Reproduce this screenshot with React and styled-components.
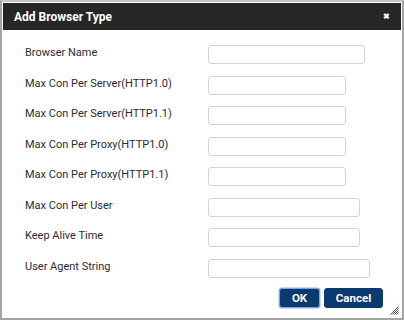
import React from "react";
import styled, { createGlobalStyle } from "styled-components";

const Global = createGlobalStyle`
  html, body { margin: 0; padding: 0; background: #fff; }
  body { font-family: Roboto, "Liberation Sans", sans-serif; }
  * { box-sizing: border-box; }
`;

const Dialog = styled.div`
  position: relative;
  width: 404px;
  height: 320px;
  border: 2px solid #a3a3a3;
  border-top-color: #c4c4c4;
  padding: 1px 1px 0 1px;
  background: #fff;
  display: flex;
  flex-direction: column;
`;

const TitleBar = styled.div`
  height: 27px;
  background: #262626;
  display: flex;
  align-items: center;
  justify-content: space-between;
  padding: 0 11px 0 11px;
  color: #fff;
`;

const Title = styled.span`
  font-size: 12px;
  font-weight: 700;
`;

const Close = styled.span`
  font-size: 8px;
  font-weight: 700;
  line-height: 1;
`;

const Body = styled.div`
  flex: 1;
  display: flex;
  flex-direction: column;
  padding: 15px 18px 0 22px;
`;

const Form = styled.div`
  display: grid;
  grid-template-columns: 183px 1fr;
  grid-auto-rows: 19px;
  row-gap: 11.57px;
  align-items: start;
`;

const Label = styled.label`
  font-size: 11px;
  line-height: 13px;
  color: #2b2b33;
  padding-top: 1px;
`;

const Input = styled.input`
  width: ${(p) => p.$w}px;
  height: 19px;
  border: 1px solid #d3d3d3;
  border-radius: 3px;
  background: #fff;
  padding: 0 4px;
  margin: 0;
  font: inherit;
  font-size: 11px;
  outline: none;
`;

const Footer = styled.div`
  display: flex;
  justify-content: flex-end;
  gap: 4px;
  margin-top: 10px;
`;

const Button = styled.button`
  height: 20px;
  min-width: ${(p) => p.$w}px;
  background: #0b3a70;
  color: #fff;
  border: 1px solid ${(p) => (p.$focus ? "#7fa6e0" : "#0b3a70")};
  box-shadow: ${(p) => (p.$focus ? "0 0 0 0.5px #9bb9e8" : "none")};
  border-radius: 3px;
  font-family: Roboto, "Liberation Sans", sans-serif;
  font-size: 11.5px;
  font-weight: 700;
  padding: 0 8px;
  cursor: pointer;
`;

const Grip = styled.svg`
  position: absolute;
  right: 3px;
  bottom: 3px;
`;

const rows = [
  ["Browser Name", 157],
  ["Max Con Per Server(HTTP1.0)", 138],
  ["Max Con Per Server(HTTP1.1)", 138],
  ["Max Con Per Proxy(HTTP1.0)", 138],
  ["Max Con Per Proxy(HTTP1.1)", 138],
  ["Max Con Per User", 152],
  ["Keep Alive Time", 152],
  ["User Agent String", 162],
];

export default function App() {
  return (
    <>
      <Global />
      <Dialog>
        <TitleBar>
          <Title>Add Browser Type</Title>
          <Close>✖</Close>
        </TitleBar>
        <Body>
          <Form>
            {rows.map(([label, w]) => (
              <React.Fragment key={label}>
                <Label>{label}</Label>
                <Input $w={w} />
              </React.Fragment>
            ))}
          </Form>
          <Footer>
            <Button $w={41} $focus>OK</Button>
            <Button $w={59}>Cancel</Button>
          </Footer>
        </Body>
        <Grip width="9" height="9" viewBox="0 0 9 9">
          <g stroke="#555" strokeWidth="1">
            <line x1="8.5" y1="0.5" x2="0.5" y2="8.5" />
            <line x1="8.5" y1="2.5" x2="2.5" y2="8.5" />
            <line x1="8.5" y1="4.5" x2="4.5" y2="8.5" />
            <line x1="8.5" y1="6.5" x2="6.5" y2="8.5" />
          </g>
        </Grip>
      </Dialog>
    </>
  );
}
